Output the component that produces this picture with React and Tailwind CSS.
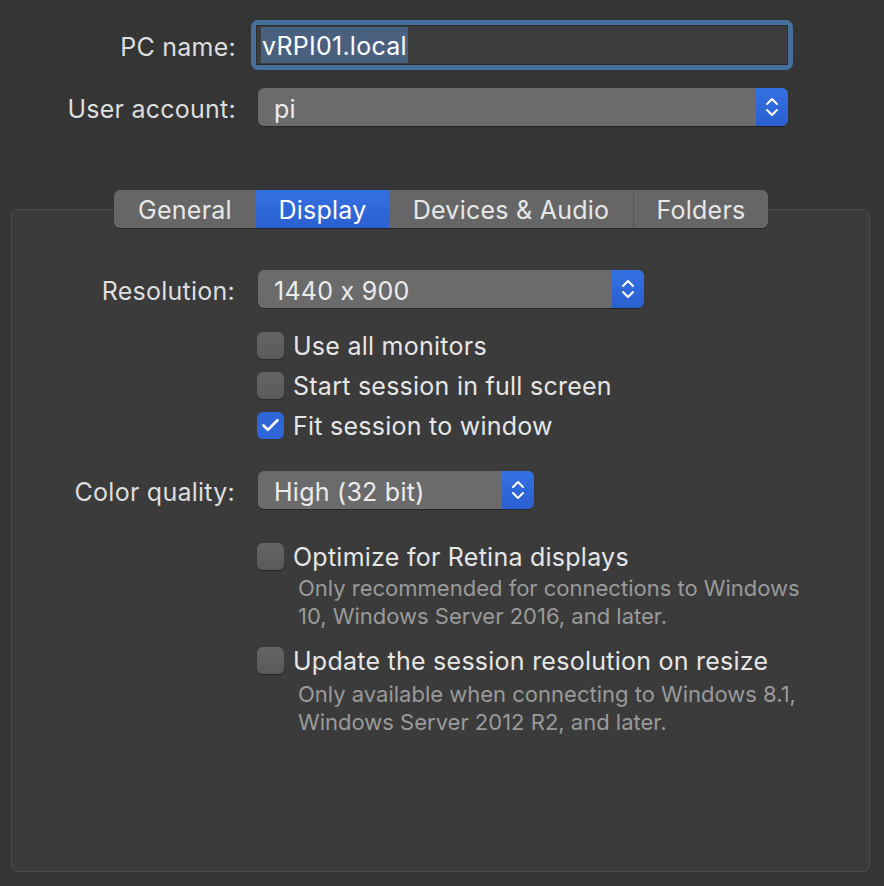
import { Check } from "lucide-react";

const font = { fontFamily: "Inter, 'Liberation Sans', sans-serif" };

function Stepper() {
  return (
    <div className="flex h-full w-[32px] items-center justify-center rounded-r-[6px] bg-gradient-to-b from-[#3571e4] to-[#2a5fd0]">
      <svg width="16" height="24" viewBox="0 0 16 24" fill="none" stroke="#ffffff" strokeWidth="2" strokeLinecap="round" strokeLinejoin="round">
        <path d="M3 9 L8 4 L13 9" />
        <path d="M3 15 L8 20 L13 15" />
      </svg>
    </div>
  );
}

function Popup({ value, width }) {
  return (
    <div className={`flex h-[38px] ${width} items-stretch overflow-hidden rounded-[6px] bg-[#6b6b6b] shadow-[0_1px_1px_rgba(0,0,0,0.35)]`}>
      <div className="flex flex-1 items-center pl-[16px] pt-[3px] text-[25px] leading-[30px] tracking-[0.25px] text-[#ececec]">{value}</div>
      <Stepper />
    </div>
  );
}

function Checkbox({ checked, label }) {
  return (
    <div className="flex h-[40px] items-center">
      {checked ? (
        <div className="flex h-[27px] w-[27px] items-center justify-center rounded-[6px] bg-[#2f66d8]">
          <Check className="h-[21px] w-[21px] text-white" strokeWidth={3} />
        </div>
      ) : (
        <div className="h-[27px] w-[27px] rounded-[6px] bg-gradient-to-b from-[#646464] to-[#5a5a5a] shadow-[0_1px_1px_rgba(0,0,0,0.3)]" />
      )}
      <span className="ml-[9px] pt-[2px] text-[25px] leading-[30px] tracking-[0.25px] text-[#e6e6e6]">{label}</span>
    </div>
  );
}

function Label({ children, width }) {
  return <div className={`${width} pt-[4px] text-right text-[25px] leading-[30px] tracking-[0.25px] text-[#dedede]`}>{children}</div>;
}

const tabs = [
  { label: "General", w: "w-[142px]" },
  { label: "Display", w: "w-[133px]", active: true },
  { label: "Devices & Audio", w: "w-[244px]" },
  { label: "Folders", w: "w-[135px]" },
];

export default function App() {
  return (
    <div className="h-[886px] w-[884px] overflow-hidden bg-[#353535] pt-[20px] [font-feature-settings:'calt'_0]" style={font}>
      {/* PC name */}
      <div className="flex items-center">
        <Label width="w-[236px]">PC name:</Label>
        <div className="ml-[15px] rounded-[7px] bg-[#45709b] p-[5px]">
          <div className="flex h-[40px] w-[532px] items-center border border-[#2c2c2c] bg-[#3d3d3d] pl-[4px]">
            <span className="bg-[#49617f] px-[1px] pt-[2px] text-[25px] leading-[34px] tracking-[0.25px] text-white">vRPI01.local</span>
          </div>
        </div>
      </div>

      {/* User account */}
      <div className="mt-[18px] flex items-center">
        <Label width="w-[236px]">User account:</Label>
        <div className="ml-[22px]">
          <Popup value="pi" width="w-[530px]" />
        </div>
      </div>

      {/* Tabs + panel */}
      <div className="mt-[64px]">
        <div className="relative z-10 -mb-[19px] ml-[114px] flex h-[38px] w-[654px] overflow-hidden rounded-[6px] bg-[#666666] shadow-[0_1px_1px_rgba(0,0,0,0.35)]">
          {tabs.map((t, i) => (
            <div
              key={t.label}
              className={`flex h-full ${t.w} items-center justify-center pt-[2px] text-[25px] leading-[30px] tracking-[0.25px] ${
                t.active ? "bg-gradient-to-b from-[#3470e2] to-[#2b5fcf] text-white" : "text-[#e8e8e8]"
              } ${i === 3 ? "border-l border-[#555555]" : ""}`}
            >
              {t.label}
            </div>
          ))}
        </div>

        <div className="mx-[11px] h-[663px] w-[859px] rounded-[7px] border border-[#4d4d4d] bg-[#3b3b3b] pt-[60px]">
          {/* Resolution */}
          <div className="flex items-center">
            <Label width="w-[223px]">Resolution:</Label>
            <div className="ml-[23px]">
              <Popup value="1440 x 900" width="w-[386px]" />
            </div>
          </div>

          <div className="ml-[245px] mt-[17px]">
            <Checkbox label="Use all monitors" />
            <Checkbox label="Start session in full screen" />
            <Checkbox label="Fit session to window" checked />
          </div>

          {/* Color quality */}
          <div className="mt-[26px] flex items-center">
            <Label width="w-[223px]">Color quality:</Label>
            <div className="ml-[23px]">
              <Popup value="High (32 bit)" width="w-[276px]" />
            </div>
          </div>

          <div className="ml-[245px] mt-[27px]">
            <Checkbox label="Optimize for Retina displays" />
            <div className="-mt-[2px] ml-[41px] text-[22px] leading-[28px] text-[#9a9a9a]">
              <div>Only recommended for connections to Windows</div>
              <div>10, Windows Server 2016, and later.</div>
            </div>
            <div className="mt-[10px]">
              <Checkbox label="Update the session resolution on resize" />
            </div>
            <div className="ml-[41px] text-[22px] leading-[28px] text-[#9a9a9a]">
              <div>Only available when connecting to Windows 8.1,</div>
              <div>Windows Server 2012 R2, and later.</div>
            </div>
          </div>
        </div>
      </div>
    </div>
  );
}
